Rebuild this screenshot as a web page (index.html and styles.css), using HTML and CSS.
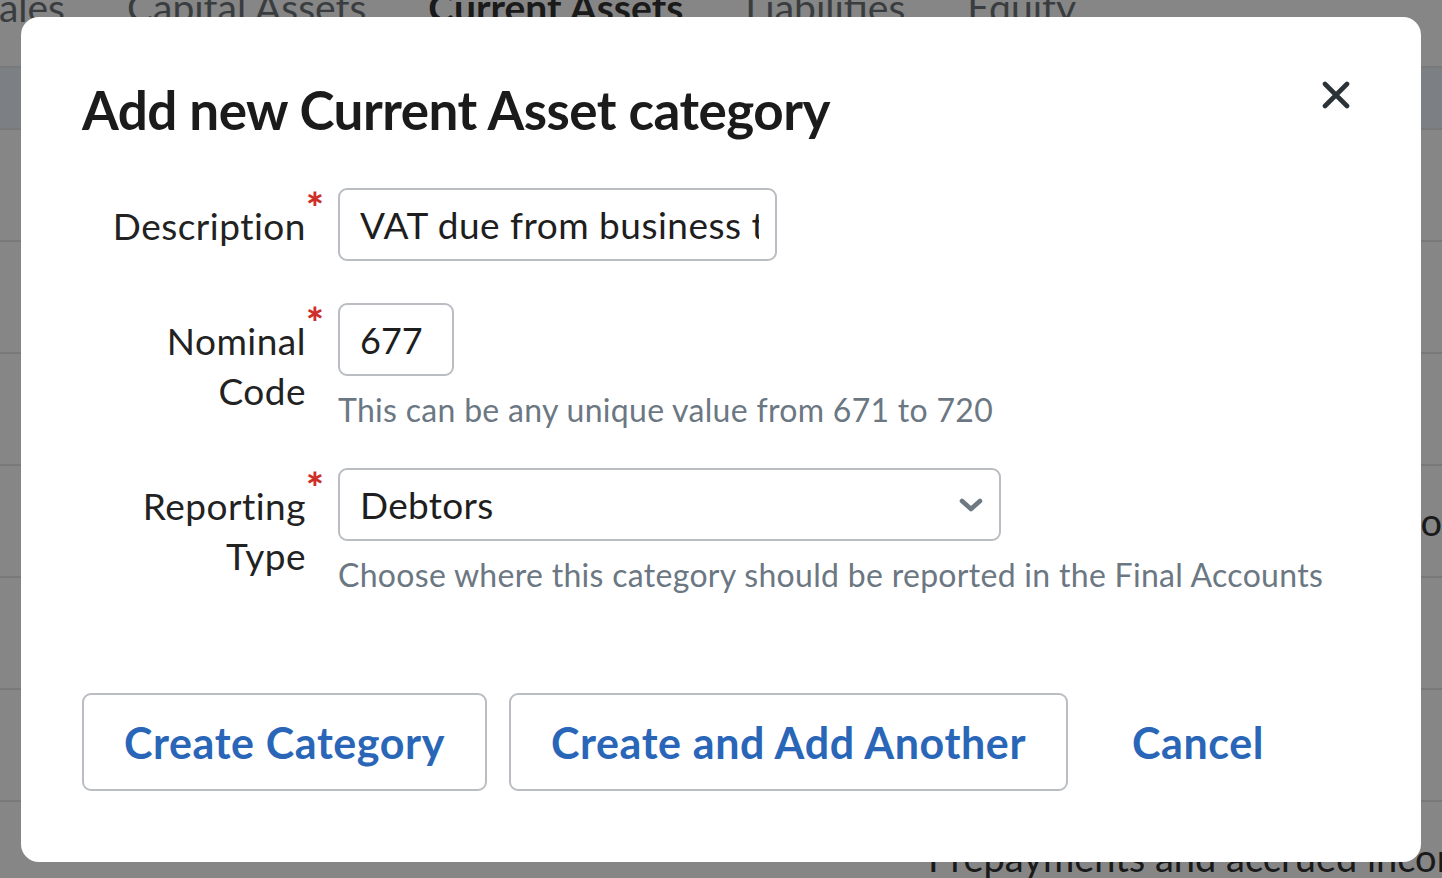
FILE: index.html
```html
<!DOCTYPE html>
<html lang="en">
<head>
<meta charset="utf-8">
<title>Add new Current Asset category</title>
<link rel="stylesheet" href="styles.css">
</head>
<body>
<div class="page">
  <nav class="tabs">
    <span class="tab">Sales</span>
    <span class="tab">Capital Assets</span>
    <span class="tab tab-active">Current Assets</span>
    <span class="tab">Liabilities</span>
    <span class="tab">Equity</span>
  </nav>
  <div class="table">
    <div class="thead"></div>
    <div class="trow"><span class="cell">Bank current account</span></div>
    <div class="trow"><span class="cell">Cash in hand</span></div>
    <div class="trow"><span class="cell">Trade debtors</span></div>
    <div class="trow trow-end"><span class="cell">Other debtors and VAT due from HMRC co</span></div>
    <div class="trow"><span class="cell">Stock and work in progress</span></div>
    <div class="trow"><span class="cell">Loans to directors</span></div>
    <div class="trow"><span class="cell">Prepayments and accrued income</span></div>
  </div>
</div>

<div class="overlay">
  <div class="modal" role="dialog" aria-labelledby="modal-title">
    <div class="modal-header">
      <h1 id="modal-title" class="modal-title">Add new Current Asset category</h1>
      <button class="close" aria-label="Close">
        <svg width="28" height="28" viewBox="0 0 28 28"><path d="M3 3 L25 25 M25 3 L3 25" stroke="#2b3338" stroke-width="4.6" stroke-linecap="round" fill="none"/></svg>
      </button>
    </div>

    <form class="form">
      <div class="row">
        <label class="label" for="desc">Description</label>
        <span class="req">*</span>
        <div class="field">
          <input id="desc" class="input input-desc" type="text" value="VAT due from business to business">
        </div>
      </div>
      <div class="row">
        <label class="label" for="code">Nominal Code</label>
        <span class="req">*</span>
        <div class="field">
          <input id="code" class="input input-code" type="text" value="677">
          <p class="help">This can be any unique value from 671 to 720</p>
        </div>
      </div>
      <div class="row">
        <label class="label" for="rtype">Reporting Type</label>
        <span class="req">*</span>
        <div class="field">
          <div id="rtype" class="select">
            <span>Debtors</span>
            <svg width="24" height="14" viewBox="0 0 24 14"><path d="M3 3 L12 11 L21 3" stroke="#6e7982" stroke-width="4.6" stroke-linecap="round" stroke-linejoin="round" fill="none"/></svg>
          </div>
          <p class="help">Choose where this category should be reported in the Final Accounts</p>
        </div>
      </div>
    </form>

    <div class="actions">
      <button class="btn btn-outline">Create Category</button>
      <button class="btn btn-outline">Create and Add Another</button>
      <button class="btn btn-link">Cancel</button>
    </div>
  </div>
</div>
</body>
</html>
```

FILE: styles.css
```css
* { box-sizing: border-box; }

html, body {
  margin: 0;
  padding: 0;
  width: 1442px;
  height: 878px;
  overflow: hidden;
  font-family: "Lato", "Liberation Sans", sans-serif;
  background: #ffffff;
}

/* Background page */
.page {
  width: 1442px;
}

.tabs {
  height: 68px;
  display: flex;
  gap: 62px;
  margin-left: -22px;
  border-bottom: 2px solid #e4e7e9;
  overflow: hidden;
}

.tab {
  font-size: 39px;
  line-height: 40px;
  margin-top: -13px;
  color: #6e7479;
  white-space: nowrap;
}

.tab-active {
  color: #333;
  font-weight: 700;
}

.table {
  display: flex;
  flex-direction: column;
}

.thead {
  height: 62px;
  background: #ecf2f9;
  border-bottom: 2px solid #e4e7e9;
}

.trow {
  height: 112px;
  border-bottom: 2px solid #e4e7e9;
  display: flex;
  align-items: center;
  padding-left: 928px;
  overflow: hidden;
}

.trow-end {
  padding-left: 0;
  justify-content: flex-end;
}

.cell {
  font-size: 38px;
  color: #333;
  white-space: nowrap;
}

/* Overlay + modal */
.overlay {
  position: fixed;
  inset: 0;
  background: rgba(0, 0, 0, 0.475);
}

.modal {
  position: absolute;
  left: 21px;
  top: 17px;
  width: 1400px;
  height: 845px;
  background: #ffffff;
  border-radius: 18px;
  padding: 61px 71px 71px 61px;
  display: flex;
  flex-direction: column;
}

.modal-header {
  display: flex;
  justify-content: space-between;
  align-items: flex-start;
}

.modal-title {
  margin: 0;
  font-size: 53px;
  line-height: 64px;
  font-weight: 700;
  color: #1b1b1b;
  letter-spacing: -0.5px;
}

.close {
  border: 0;
  background: none;
  padding: 0;
  margin-top: 3px;
  width: 28px;
  height: 28px;
  display: flex;
  cursor: pointer;
}

.form {
  margin-top: 46px;
  display: flex;
  flex-direction: column;
  gap: 42px;
}

.row {
  display: flex;
  align-items: flex-start;
}

.label {
  width: 224px;
  flex: none;
  text-align: right;
  font-size: 37px;
  letter-spacing: 0.5px;
  line-height: 50px;
  padding-top: 13px;
  color: #222;
}

.req {
  width: 32px;
  flex: none;
  padding-left: 0;
  margin-top: -2px;
  font-size: 42px;
  line-height: 42px;
  font-weight: 900;
  color: #cf2f2b;
}

.field {
  display: flex;
  flex-direction: column;
  align-items: flex-start;
}

.input {
  height: 73px;
  border: 2px solid #babec2;
  border-radius: 9px;
  padding: 0 16px 0 20px;
  font-family: "Lato", "Liberation Sans", sans-serif;
  font-size: 37px;
  letter-spacing: 0.5px;
  color: #1e1e1e;
  background: #fff;
  outline: none;
}

.input-desc { width: 439px; }
.input-code { width: 116px; letter-spacing: 0; font-size: 36px; }

.select {
  width: 663px;
  height: 73px;
  border: 2px solid #babec2;
  border-radius: 9px;
  padding: 0 16px 0 20px;
  display: flex;
  align-items: center;
  justify-content: space-between;
  font-size: 37px;
  letter-spacing: 0.3px;
  color: #1e1e1e;
}

.help {
  margin: 17px 0 0;
  font-size: 32px;
  letter-spacing: 0.3px;
  line-height: 33px;
  color: #6b7782;
  white-space: nowrap;
}

.actions {
  margin-top: 102px;
  display: flex;
  gap: 22px;
}

.btn {
  height: 98px;
  font-family: "Lato", "Liberation Sans", sans-serif;
  font-size: 43px;
  letter-spacing: 0.6px;
  font-weight: 700;
  color: #2a66b8;
  background: #fff;
  border-radius: 9px;
  padding: 0 40px;
  cursor: pointer;
}

.btn-outline {
  border: 2px solid #babec2;
}

.btn-link {
  border: 2px solid transparent;
}
```
